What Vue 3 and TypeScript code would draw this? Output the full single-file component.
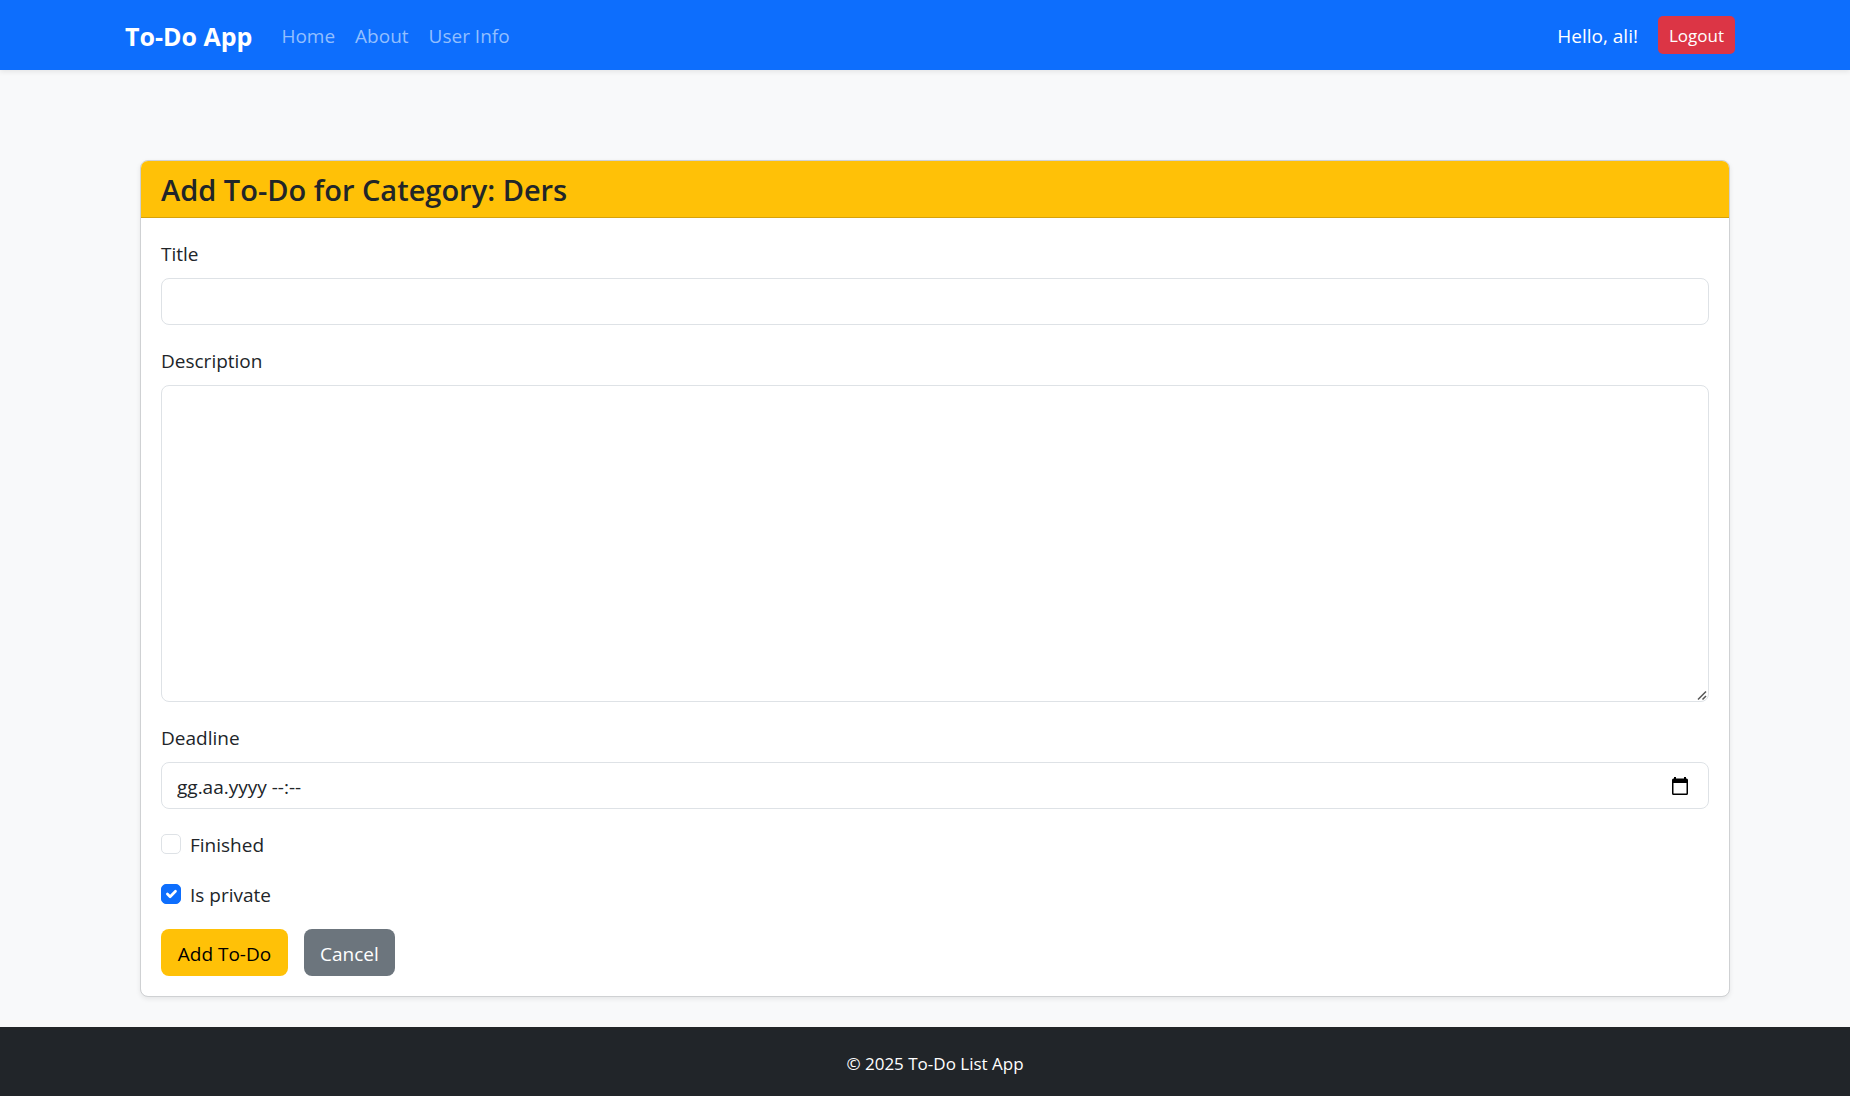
<script setup lang="ts">
import { reactive } from 'vue'

interface NavLink {
  label: string
  href: string
}

const links: NavLink[] = [
  { label: 'Home', href: '#home' },
  { label: 'About', href: '#about' },
  { label: 'User Info', href: '#user' },
]

const form = reactive({
  title: '',
  description: '',
  deadline: '',
  finished: false,
  isPrivate: true,
})
</script>

<template>
  <div class="page">
    <header class="navbar">
      <nav class="container navbar-inner">
        <a class="brand" href="#">To-Do App</a>
        <ul class="nav-links">
          <li v-for="link in links" :key="link.href">
            <a :href="link.href">{{ link.label }}</a>
          </li>
        </ul>
        <span class="greeting">Hello, ali!</span>
        <button type="button" class="btn-logout">Logout</button>
      </nav>
    </header>

    <main class="content">
      <div class="container content-inner">
        <section class="card">
          <h1 class="card-header">Add To-Do for Category: Ders</h1>
          <form class="card-body" @submit.prevent>
            <div class="field">
              <label for="title">Title</label>
              <input id="title" v-model="form.title" class="control" type="text" />
            </div>
            <div class="field">
              <label for="description">Description</label>
              <textarea id="description" v-model="form.description" class="control area"></textarea>
            </div>
            <div class="field">
              <label for="deadline">Deadline</label>
              <div class="control date">
                <input id="deadline" v-model="form.deadline" type="text" placeholder="gg.aa.yyyy --:--" />
                <button type="button" class="picker" aria-label="Open calendar">
                  <svg viewBox="0 0 16 18" width="16" height="18" aria-hidden="true">
                    <path
                      fill="#000"
                      fill-rule="evenodd"
                      d="M2 0h2v1.500h8V0h2v1.500h.5A1.500 1.500 0 0 1 16 3v13.500a1.500 1.500 0 0 1-1.500 1.500h-13A1.500 1.500 0 0 1 0 16.500V3a1.500 1.500 0 0 1 1.500-1.500H2zM1.500 6v10.500h13V6z"
                    />
                  </svg>
                </button>
              </div>
            </div>
            <div class="check">
              <input id="finished" v-model="form.finished" type="checkbox" />
              <label for="finished">Finished</label>
            </div>
            <div class="check">
              <input id="private" v-model="form.isPrivate" type="checkbox" />
              <label for="private">Is private</label>
            </div>
            <div class="actions">
              <button type="submit" class="btn btn-add">Add To-Do</button>
              <button type="button" class="btn btn-cancel">Cancel</button>
            </div>
          </form>
        </section>
      </div>
    </main>

    <footer class="footer">© 2025 To-Do List App</footer>
  </div>
</template>

<style>
body {
  margin: 0;
  background: #f8f9fa;
}
</style>

<style scoped>
.page,
.page * {
  box-sizing: border-box;
}

.page {
  display: flex;
  flex-direction: column;
  min-height: 100vh;
  background: #f8f9fa;
  color: #212529;
  font-family: 'Open Sans', 'Noto Sans', sans-serif;
  font-size: 19px;
  line-height: 30px;
}

button,
input,
textarea {
  font: inherit;
  color: inherit;
}

.container {
  width: 100%;
  max-width: 1650px;
  margin: 0 auto;
}

.navbar {
  padding-left: 20px;
  background: #0d6efd;
  box-shadow: 0 2px 5px rgba(0, 0, 0, 0.08);
}

.navbar-inner {
  display: flex;
  align-items: center;
  height: 70px;
  padding: 0 25px 0 15px;
}

.brand,
.nav-links,
.greeting {
  padding: 2px 0 0;
}

.brand {
  margin-right: 19px;
  color: #fff;
  font-size: 25px;
  font-weight: 700;
  text-decoration: none;
}

.nav-links {
  display: flex;
  flex: 1;
  margin: 0;
  list-style: none;
}

.nav-links a {
  padding: 0 10px;
  color: #92bfff;
  text-decoration: none;
}

.greeting {
  margin-right: 20px;
  color: #fff;
}

.btn-logout {
  height: 38px;
  padding: 1px 11px 0;
  border: 0;
  border-radius: 5px;
  background: #dc3545;
  color: #fff;
  font-size: 17px;
}

.content {
  padding: 90px 0 30px 20px;
}

.content-inner {
  padding: 0 30px;
}

.card {
  overflow: hidden;
  border: 1px solid #cfd1d3;
  border-radius: 8px;
  background: #fff;
  background-clip: padding-box;
  box-shadow: 0 2px 5px rgba(0, 0, 0, 0.08);
}

.card-header {
  margin: 0;
  padding: 11px 20px 9px;
  border-bottom: 1px solid #d6a20b;
  background: #ffc107;
  font-size: 29px;
  font-weight: 600;
  line-height: 36px;
}

.card-body {
  padding: 20px;
}

.field {
  margin-bottom: 20px;
}

.field > label {
  display: block;
  margin-bottom: 8px;
  line-height: 32px;
}

.control {
  display: block;
  width: 100%;
  height: 47px;
  padding: 8px 15px;
  border: 1px solid #dee2e6;
  border-radius: 8px;
  background: #fff;
}

.area {
  height: 317px;
  resize: vertical;
}

.area::-webkit-resizer {
  background: url("data:image/svg+xml,%3csvg xmlns='http://www.w3.org/2000/svg' width='15' height='15' viewBox='0 0 15 15'%3e%3cpath fill='none' stroke='%23555' stroke-width='1.500' d='m5 13.500 8-8m-3.500 8 3.500-3.500'/%3e%3c/svg%3e")
    right bottom no-repeat;
}

.date {
  display: flex;
  align-items: center;
  padding: 0 15px;
}

.date input {
  flex: 1;
  min-width: 0;
  padding: 2px 0 0;
  border: 0;
  outline: 0;
  background: transparent;
}

.date input::placeholder {
  color: #212529;
  opacity: 1;
}

.picker {
  display: flex;
  padding: 0 5px;
  border: 0;
  background: transparent;
}

.check {
  display: flex;
  gap: 9px;
  height: 30px;
  margin-bottom: 20px;
}

.check label {
  line-height: 32px;
}

.check input {
  width: 20px;
  height: 20px;
  margin: 5px 0 0;
  border: 1px solid #dee2e6;
  border-radius: 5px;
  background: #fff;
  appearance: none;
}

.check input:checked {
  border-color: #0d6efd;
  background: #0d6efd
    url("data:image/svg+xml,%3csvg xmlns='http://www.w3.org/2000/svg' viewBox='0 0 20 20'%3e%3cpath fill='none' stroke='%23fff' stroke-linecap='round' stroke-linejoin='round' stroke-width='3' d='m6 10 3 3 6-6'/%3e%3c/svg%3e")
    center / 18px 18px no-repeat;
}

.actions {
  display: flex;
  gap: 16px;
}

.btn {
  height: 47px;
  padding: 2px 16px 0;
  border: 0;
  border-radius: 8px;
}

.btn-add {
  min-width: 127px;
  background: #ffc107;
  color: #000;
}

.btn-cancel {
  background: #6c757d;
  color: #fff;
}

.footer {
  flex: 1;
  padding: 22px 0 10px 20px;
  background: #212529;
  color: #fff;
  font-size: 17px;
  text-align: center;
}
</style>
